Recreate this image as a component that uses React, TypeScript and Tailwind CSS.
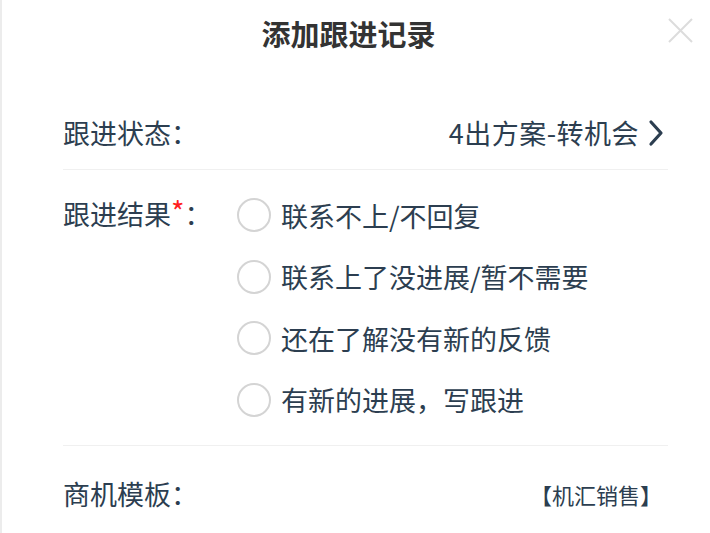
import { useState } from 'react';

const options = [
  '联系不上/不回复',
  '联系上了没进展/暂不需要',
  '还在了解没有新的反馈',
  '有新的进展，写跟进',
];

export default function App() {
  const [picked, setPicked] = useState<number | null>(null);

  return (
    <div
      className="min-h-screen w-[710px] h-[533px] overflow-hidden bg-white border-l-2 border-[#ececec] text-[#2c3e50]"
      style={{ fontFamily: '"Noto Sans CJK SC", "Noto Sans", sans-serif' }}
    >
      <div className="relative h-[66px] flex items-center justify-center pr-[15px]">
        <h1 className="text-[29px] font-bold text-[#333333] leading-none">添加跟进记录</h1>
        <button className="absolute left-[666px] top-[18px] w-[25px] h-[25px]">
          <svg viewBox="0 0 25 25" className="w-[25px] h-[25px]">
            <path d="M1 1 L24 24 M24 1 L1 24" stroke="#dcdcdc" strokeWidth="2" fill="none" />
          </svg>
        </button>
      </div>

      <div className="pl-[61px] pr-[42px]">
        <div className="h-[104px] pt-[30px] flex items-center justify-between border-b border-[#f0f0f0]">
          <span className="text-[27px] leading-none">跟进状态：</span>
          <div className="flex items-center">
            <span className="text-[27px] leading-none tracking-[0.5px]">4出方案-转机会</span>
            <svg viewBox="0 0 16 28" className="w-[16px] h-[28px] ml-[9px] mr-[4px]">
              <path d="M3 3 L13 14 L3 25" stroke="#2c3e50" strokeWidth="3.2" fill="none" strokeLinecap="round" strokeLinejoin="round" />
            </svg>
          </div>
        </div>

        <div className="flex py-[28px] border-b border-[#f0f0f0]">
          <div className="w-[174px] shrink-0 h-[30px] flex items-center text-[27px] leading-none">
            跟进结果<span className="text-[#ff1f1f] text-[29px] -mt-[6px]">*</span>：
          </div>
          <div className="flex flex-col gap-[27.5px]">
            {options.map((o, i) => (
              <label key={o} className="flex items-center cursor-pointer" onClick={() => setPicked(i)}>
                <span
                  className={
                    'w-[34px] h-[34px] rounded-full border-2 shrink-0 ' +
                    (picked === i ? 'border-[#2c3e50] bg-[#2c3e50]' : 'border-[#d4d4d4] bg-white')
                  }
                />
                <span className="ml-[10px] text-[27px] leading-none">{o}</span>
              </label>
            ))}
          </div>
        </div>

        <div className="h-[96px] flex items-center justify-between">
          <span className="text-[27px] leading-none">商机模板：</span>
          <span className="text-[22px] leading-none mr-[6px]">【机汇销售】</span>
        </div>
      </div>
    </div>
  );
}
